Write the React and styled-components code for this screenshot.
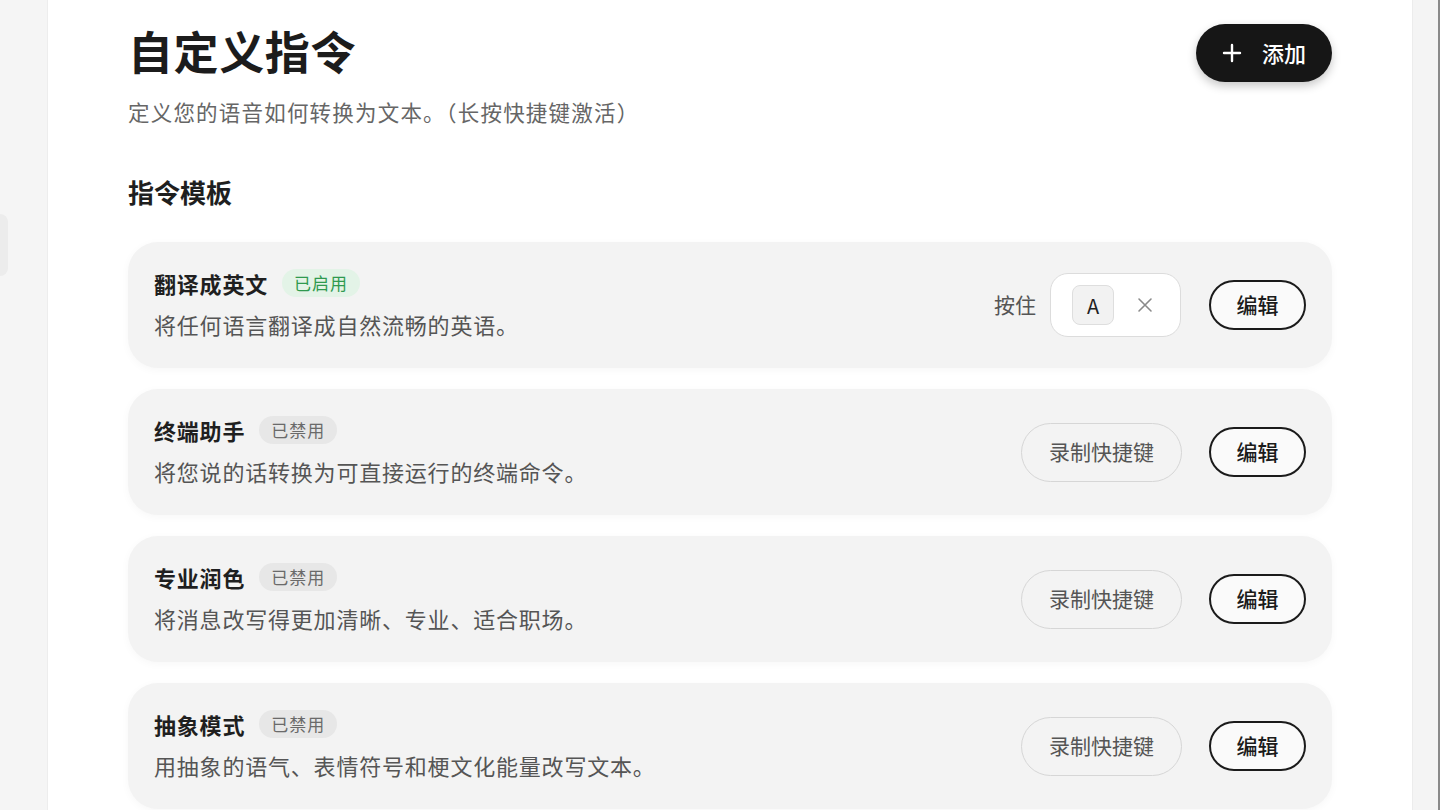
import styled, { createGlobalStyle } from "styled-components";

const GlobalStyle = createGlobalStyle`
  html, body {
    margin: 0;
    padding: 0;
    background: #f5f5f5;
    font-family: "Noto Sans CJK SC", "Noto Sans", sans-serif;
    color: #1d1d1d;
  }
  * { box-sizing: border-box; }
`;

const commands = [
    {
        name: "翻译成英文",
        enabled: true,
        desc: "将任何语言翻译成自然流畅的英语。",
        hotkey: "A",
    },
    {
        name: "终端助手",
        enabled: false,
        desc: "将您说的话转换为可直接运行的终端命令。",
    },
    {
        name: "专业润色",
        enabled: false,
        desc: "将消息改写得更加清晰、专业、适合职场。",
    },
    {
        name: "抽象模式",
        enabled: false,
        desc: "用抽象的语气、表情符号和梗文化能量改写文本。",
    },
];

export default function App() {
    return (
        <>
            <GlobalStyle />
            <Page>
                <LeftStrip>
                    <SideItem />
                </LeftStrip>
                <Panel>
                    <Header>
                        <Title>自定义指令</Title>
                        <AddButton>
                            <svg width="20" height="20" viewBox="0 0 20 20">
                                <path d="M10 2v16M2 10h16" stroke="#fff" strokeWidth="2.4" strokeLinecap="round" />
                            </svg>
                            <AddLabel>添加</AddLabel>
                        </AddButton>
                    </Header>
                    <Subtitle>定义您的语音如何转换为文本。（长按快捷键激活）</Subtitle>
                    <SectionTitle>指令模板</SectionTitle>
                    <CardList>
                        {commands.map((cmd) => (
                            <Card key={cmd.name}>
                                <Info>
                                    <NameRow>
                                        <Name>{cmd.name}</Name>
                                        <Badge $on={cmd.enabled}>{cmd.enabled ? "已启用" : "已禁用"}</Badge>
                                    </NameRow>
                                    <Desc>{cmd.desc}</Desc>
                                </Info>
                                <Actions>
                                    {cmd.hotkey ? (
                                        <>
                                            <HoldLabel>按住</HoldLabel>
                                            <HotkeyBox>
                                                <Key>{cmd.hotkey}</Key>
                                                <ClearIcon width="16" height="16" viewBox="0 0 16 16">
                                                    <path d="M2 2l12 12M14 2L2 14" stroke="#8a8a8a" strokeWidth="1.6" strokeLinecap="round" />
                                                </ClearIcon>
                                            </HotkeyBox>
                                        </>
                                    ) : (
                                        <RecordButton>录制快捷键</RecordButton>
                                    )}
                                    <EditButton>编辑</EditButton>
                                </Actions>
                            </Card>
                        ))}
                    </CardList>
                </Panel>
                <RightStrip />
            </Page>
        </>
    );
}

const Page = styled.div`
    display: flex;
    width: 1440px;
    height: 810px;
    overflow: hidden;
`;

const LeftStrip = styled.div`
    width: 48px;
    flex-shrink: 0;
    background: #f5f5f5;
    border-right: 1px solid #ededed;
    padding-top: 214px;
`;

const SideItem = styled.div`
    width: 8px;
    height: 62px;
    background: #ececec;
    border-radius: 0 10px 10px 0;
`;

const Panel = styled.div`
    flex: 1;
    background: #ffffff;
    padding: 24px 80px 0 80px;
    display: flex;
    flex-direction: column;
`;

const RightStrip = styled.div`
    width: 28px;
    flex-shrink: 0;
    background: #f4f4f4;
    border-left: 1px solid #ececec;
    border-right: 2px solid #8a8a8a;
`;

const Header = styled.div`
    display: flex;
    justify-content: space-between;
    align-items: center;
    height: 58px;
`;

const Title = styled.h1`
    margin: 0 0 4px;
    font-size: 45px;
    font-weight: 700;
    line-height: 58px;
    letter-spacing: 0.6px;
    color: #1c1c1c;
`;

const AddButton = styled.button`
    display: flex;
    align-items: center;
    gap: 20px;
    height: 58px;
    padding: 0 26px;
    border: none;
    border-radius: 29px;
    background: #161616;
    color: #fff;
    font-family: inherit;
    font-size: 22px;
    font-weight: 500;
    box-shadow: 0 4px 10px rgba(0, 0, 0, 0.22);
`;

const AddLabel = styled.span`
    margin-top: -3px;
`;

const Subtitle = styled.p`
    margin: 15px 0 0;
    font-size: 21.5px;
    line-height: 30px;
    letter-spacing: 1.2px;
    color: #666;
`;

const SectionTitle = styled.h2`
    margin: 47px 0 0;
    font-size: 26px;
    font-weight: 700;
    line-height: 36px;
    color: #1f1f1f;
`;

const CardList = styled.div`
    display: flex;
    flex-direction: column;
    gap: 21px;
    margin-top: 32px;
`;

const Card = styled.div`
    display: flex;
    align-items: center;
    justify-content: space-between;
    height: 126px;
    padding: 0 26px;
    border-radius: 30px;
    background: #f3f3f3;
    box-shadow: 0 2px 8px rgba(0, 0, 0, 0.035);
`;

const Info = styled.div`
    display: flex;
    flex-direction: column;
    gap: 11px;
    padding-bottom: 4px;
`;

const NameRow = styled.div`
    display: flex;
    align-items: center;
    gap: 14px;
    height: 30px;
`;

const Name = styled.span`
    font-size: 22px;
    font-weight: 700;
    color: #1f1f1f;
    line-height: 30px;
    letter-spacing: 0.8px;
`;

const Badge = styled.span`
    display: inline-flex;
    align-items: center;
    height: 28px;
    padding: 0 12px;
    border-radius: 14px;
    font-size: 17px;
    letter-spacing: 1px;
    background: ${(p) => (p.$on ? "#e3f3e7" : "#e7e7e7")};
    color: ${(p) => (p.$on ? "#2f9a4f" : "#6a6a6a")};
`;

const Desc = styled.span`
    font-size: 22px;
    line-height: 30px;
    letter-spacing: 0.8px;
    color: #555;
`;

const Actions = styled.div`
    display: flex;
    align-items: center;
`;

const HoldLabel = styled.span`
    font-size: 21px;
    color: #555;
    margin-right: 14px;
    margin-top: -3px;
`;

const HotkeyBox = styled.div`
    display: flex;
    align-items: center;
    width: 131px;
    height: 64px;
    padding-left: 21px;
    background: #fff;
    border: 1px solid #dcdcdc;
    border-radius: 18px;
    margin-right: 28px;
`;

const Key = styled.span`
    display: flex;
    align-items: center;
    justify-content: center;
    width: 42px;
    height: 40px;
    background: #f2f2f2;
    border: 1px solid #dedede;
    border-radius: 8px;
    font-size: 20px;
    color: #222;
`;

const ClearIcon = styled.svg`
    margin-left: 23px;
`;

const RecordButton = styled.button`
    height: 59px;
    width: 161px;
    border: 1.5px solid #d6d6d6;
    border-radius: 30px;
    background: transparent;
    font-family: inherit;
    font-size: 21px;
    color: #555;
    margin-right: 27px;
    padding-bottom: 4px;
`;

const EditButton = styled.button`
    height: 50px;
    width: 97px;
    border: 2px solid #1b1b1b;
    border-radius: 25px;
    background: #fafafa;
    font-family: inherit;
    font-size: 21px;
    font-weight: 500;
    color: #1b1b1b;
    padding-bottom: 4px;
`;
